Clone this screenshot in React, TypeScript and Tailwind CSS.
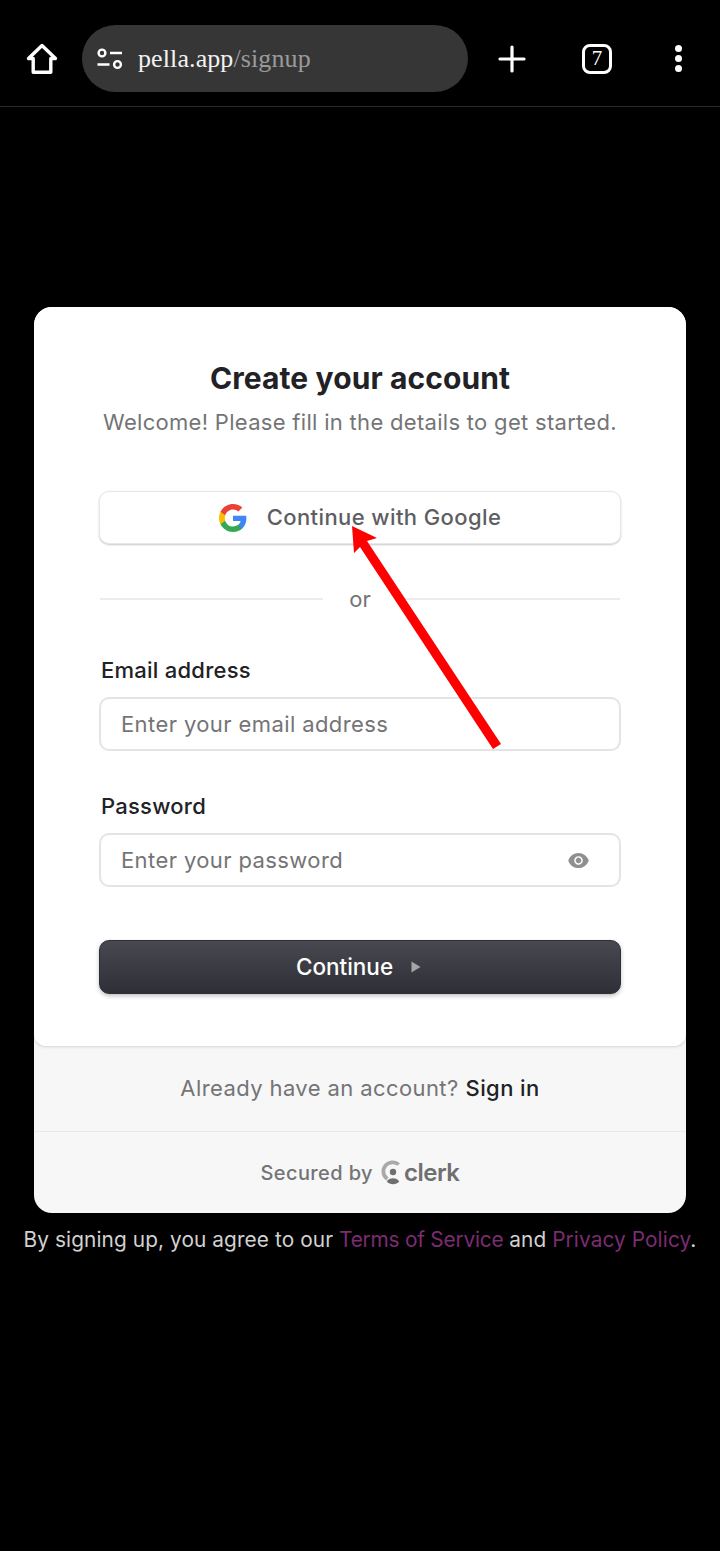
const font = { fontFamily: "Inter, sans-serif" };

const BrowserBar = () => (
  <header className="flex h-[107px] items-center border-b border-[#2a2a2a] bg-black pt-[11px]">
    <svg className="ml-[26px] h-[32px] w-[32px]" viewBox="0 0 32 32" fill="none" stroke="#fff" strokeWidth="3.4" strokeLinejoin="round">
      <path d="M16 2.5 2.500 15.500h4.700v13.800h17.600V15.500h4.700Z" />
    </svg>
    <div className="ml-[24px] flex h-[67px] w-[386px] items-center rounded-full bg-[#363636] pl-[15px]">
      <svg className="h-[22px] w-[26px]" viewBox="0 0 26 22" fill="none" stroke="#fff" strokeWidth="2.4">
        <circle cx="5" cy="5" r="3.4" />
        <circle cx="20.5" cy="16.5" r="3.4" />
        <path d="M13 5h12M0.500 16.500h12" />
      </svg>
      <span className="ml-[15px] text-[26px] leading-none tracking-[0.1px] text-[#f2f2f2]" style={{ fontFamily: "'Liberation Serif', serif" }}>
        pella.app<span className="text-[#9a9a9a]">/signup</span>
      </span>
    </div>
    <svg className="ml-[30px] h-[28px] w-[28px]" viewBox="0 0 28 28" stroke="#fff" strokeWidth="3.2" strokeLinecap="round">
      <path d="M14 2v24M2 14h24" />
    </svg>
    <div className="ml-[56px] flex h-[30px] w-[30px] items-center justify-center rounded-[8px] border-[3px] border-white text-[21px] leading-none text-white" style={{ fontFamily: "'Liberation Serif', serif" }}>
      7
    </div>
    <div className="ml-[63px] flex flex-col gap-[3px]">
      <span className="h-[7px] w-[7px] rounded-full bg-white" />
      <span className="h-[7px] w-[7px] rounded-full bg-white" />
      <span className="h-[7px] w-[7px] rounded-full bg-white" />
    </div>
  </header>
);

const GoogleLogo = () => (
  <svg className="h-[28px] w-[28px]" viewBox="0 0 24 24">
    <path fill="#4285F4" d="M23.500 12.300c0-.8-.1-1.600-.2-2.300H12v4.500h6.500c-.3 1.500-1.100 2.700-2.400 3.600v3h3.900c2.200-2.100 3.500-5.200 3.500-8.800Z" />
    <path fill="#34A853" d="M12 24c3.200 0 6-1.100 8-2.900l-3.900-3c-1.100.7-2.500 1.200-4.100 1.200-3.100 0-5.800-2.100-6.700-5H1.300v3.100C3.300 21.300 7.300 24 12 24Z" />
    <path fill="#FBBC05" d="M5.300 14.300c-.5-1.500-.5-3.100 0-4.600V6.600h-4c-1.700 3.400-1.700 7.400 0 10.800Z" />
    <path fill="#EA4335" d="M12 4.700c1.800 0 3.300.6 4.600 1.800L20 3.100C17.900 1.200 15.200 0 12 0 7.300 0 3.300 2.700 1.300 6.600l4 3.100c.9-2.900 3.600-5 6.700-5Z" />
  </svg>
);

const ClerkMark = () => (
  <svg className="h-[25px] w-[21px]" viewBox="0 0 21 25">
    <path fill="#a9a9a9" d="M19 3.500C17 1.400 14.400.5 11.500.5 5.300.5.500 5.500.500 11.500c0 3.800 1.800 7 4.800 9l2.200-3.200c-2-1.400-3.200-3.500-3.200-5.800 0-4 3.200-7.200 7.200-7.200 1.800 0 3.300.5 4.500 1.500Z" />
    <circle cx="12" cy="12" r="3.200" fill="#6f6f71" />
    <path fill="#6f6f71" d="M5.800 21.500c1.300-2.200 3.500-3.300 6.200-3.300s4.900 1.100 6.200 3.300c-1.500 1.700-3.700 2.800-6.200 2.800s-4.700-1.100-6.200-2.800Z" />
  </svg>
);

const EyeIcon = () => (
  <svg className="absolute top-[12px] right-[27px] h-[27px] w-[27px]" viewBox="0 0 16 16" fill="#8f8f91">
    <path d="M8 9.607c.421 0 .825-.17 1.123-.47a1.617 1.617 0 0 0 0-2.273 1.578 1.578 0 0 0-2.246 0 1.617 1.617 0 0 0 0 2.273c.298.3.702.47 1.123.47Z" />
    <path fillRule="evenodd" clipRule="evenodd" d="M2.070 8.380a1.073 1.073 0 0 1 0-.763 6.420 6.420 0 0 1 2.334-2.990A6.302 6.302 0 0 1 8 3.500c2.704 0 5.014 1.710 5.930 4.117.094.246.093.517 0 .763a6.420 6.420 0 0 1-2.334 2.990A6.301 6.301 0 0 1 8 12.500c-2.704 0-5.013-1.710-5.930-4.120ZM10.540 8c0 .682-.267 1.336-.743 1.818A2.526 2.526 0 0 1 8 10.571c-.674 0-1.320-.27-1.796-.753A2.587 2.587 0 0 1 5.460 8c0-.682.268-1.336.744-1.818A2.525 2.525 0 0 1 8 5.429c.674 0 1.320.27 1.797.753.476.482.744 1.136.744 1.818Z" />
  </svg>
);

const Field = ({ label, type, placeholder, eye }: { label: string; type: string; placeholder: string; eye?: boolean }) => (
  <div className="flex flex-col">
    <label className="ml-[2px] text-[22px] leading-[26px] font-medium tracking-[0.25px] text-[#212126]">{label}</label>
    <div className="relative mt-[14px] h-[54px] rounded-[10px] border-2 border-[#e4e4e4] bg-white">
      <input
        type={type}
        placeholder={placeholder}
        className="h-full w-full rounded-[10px] bg-transparent pl-[20px] text-[22px] tracking-[0.4px] text-[#747476] outline-none placeholder:text-[#747476]"
      />
      {eye && <EyeIcon />}
    </div>
  </div>
);

const App = () => (
  <div className="relative h-[1551px] w-[720px] overflow-hidden bg-black" style={font}>
    <BrowserBar />

    <main className="flex flex-col items-center pt-[200px]">
      <section className="w-[652px] overflow-hidden rounded-[18px] bg-[#f7f7f7]">
        <div className="h-[739px] rounded-b-[12px] bg-white px-[65px] pt-[52px] shadow-[0_1px_3px_rgba(0,0,0,0.15)]">
          <h1 className="text-center text-[30px] leading-[38px] font-bold tracking-[0.1px] text-[#212126]">Create your account</h1>
          <p className="mt-[9px] text-center text-[22px] leading-[32px] tracking-[0.3px] text-[#747476]">Welcome! Please fill in the details to get started.</p>

          <button className="mt-[53px] flex h-[53px] w-full items-center justify-center gap-[20px] rounded-[10px] border border-[#e8e8e8] bg-white text-[22px] font-medium tracking-[0.4px] text-[#5e5e62] shadow-[0_1px_2px_rgba(0,0,0,0.22)]">
            <GoogleLogo />
            Continue with Google
          </button>

          <div className="mt-[40px] flex items-center px-[1px]">
            <div className="h-[2px] flex-1 bg-[#ececec]" />
            <span className="mx-[26px] text-[22px] leading-[30px] text-[#747476]">or</span>
            <div className="h-[2px] flex-1 bg-[#ececec]" />
          </div>

          <div className="mt-[43px] flex flex-col gap-[42px]">
            <Field label="Email address" type="email" placeholder="Enter your email address" />
            <Field label="Password" type="password" placeholder="Enter your password" eye />
          </div>

          <button className="mt-[53px] flex h-[54px] w-full items-center justify-center gap-[18px] rounded-[10px] border border-[#2f3037] bg-gradient-to-b from-[#484950] to-[#2f3037] pr-[3px] text-[22.5px] font-medium text-white shadow-[0_2px_4px_rgba(0,0,0,0.25)]">
            Continue
            <svg className="h-[12px] w-[10px]" viewBox="0 0 10 12">
              <path fill="#a5a5a8" d="M0.500 0.500 9.500 6 0.500 11.500Z" />
            </svg>
          </button>
        </div>

        <div className="flex h-[86px] items-center justify-center gap-[7px] border-b border-[#e8e8e8] text-[22px] tracking-[0.4px]">
          <span className="text-[#747476]">Already have an account?</span>
          <span className="font-medium text-[#212126]">Sign in</span>
        </div>

        <div className="flex h-[81px] items-center justify-center gap-[8px] text-[20px] font-medium tracking-[0.4px] text-[#747476]">
          <span>Secured by</span>
          <span className="flex items-center gap-[2px]">
            <ClerkMark />
            <span className="text-[24px] font-semibold tracking-[-0.5px] text-[#6f6f71]">clerk</span>
          </span>
        </div>
      </section>

      <p className="mt-[13px] text-[20.8px] leading-[28px] tracking-[0.1px] whitespace-nowrap text-[#d2d2d2]">
        By signing up, you agree to our <span className="tracking-[-0.2px] text-[#7c2c72]">Terms of Service</span> and <span className="text-[#7c2c72]">Privacy Policy</span>.
      </p>
    </main>

    {/* red pointer over the Google button */}
    <svg className="absolute top-0 left-0 h-[1551px] w-[720px]" viewBox="0 0 720 1551">
      <path fill="#fe0000" d="M352 526 377 538 367 541 501 744 493 749 360 547 354 553Z" />
    </svg>
  </div>
);

export default App;
